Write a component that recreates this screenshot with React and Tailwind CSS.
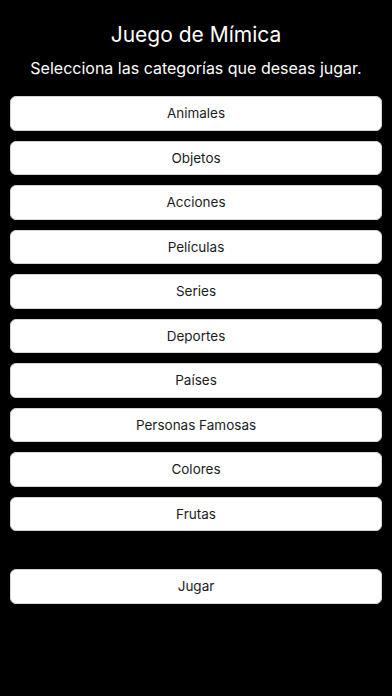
const categories = [
  "Animales",
  "Objetos",
  "Acciones",
  "Películas",
  "Series",
  "Deportes",
  "Países",
  "Personas Famosas",
  "Colores",
  "Frutas",
];

function OptionButton({ label }) {
  return (
    <button
      type="button"
      className="flex h-[34.5px] w-full items-center justify-center rounded-[6px] border border-[#d4d4d4] bg-white text-[13.5px] text-[#1c1c1e]"
    >
      {label}
    </button>
  );
}

export default function App() {
  return (
    <div className="min-h-[696px] w-full bg-black px-[10px] font-['Inter',sans-serif] text-white">
      <h1 className="pt-[22px] text-center text-[21px] font-normal leading-[26px]">Juego de Mímica</h1>
      <p className="mt-[9px] text-center text-[16px] leading-[22px]">
        Selecciona las categorías que deseas jugar.
      </p>
      <div className="mt-[17px] flex flex-col gap-[10px]">
        {categories.map((c) => (
          <OptionButton key={c} label={c} />
        ))}
      </div>
      <div className="mt-[38px]">
        <OptionButton label="Jugar" />
      </div>
    </div>
  );
}
